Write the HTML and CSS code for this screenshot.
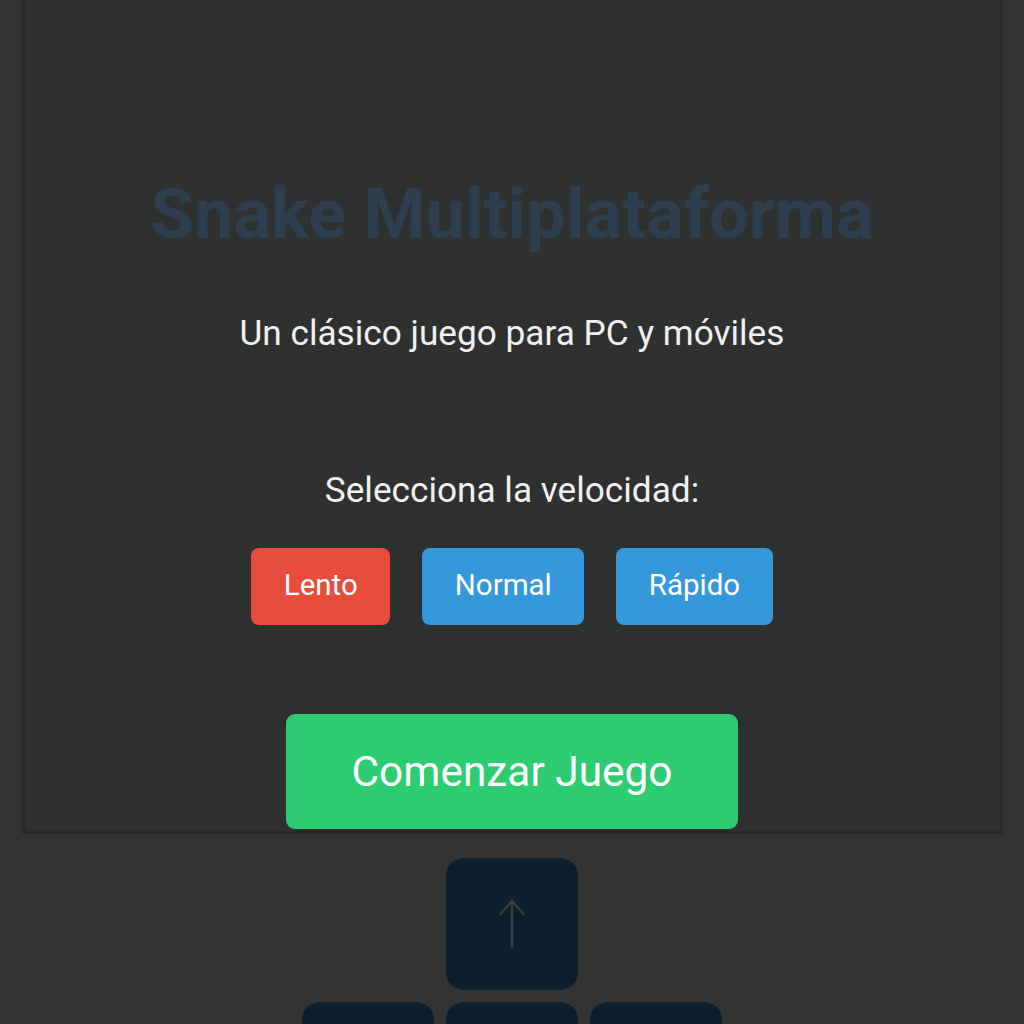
FILE: index.html
```html
<!DOCTYPE html>
<html lang="es">
<head>
<meta charset="utf-8">
<title>Snake Multiplataforma</title>
<link rel="stylesheet" href="styles.css">
</head>
<body>
<div class="game">
  <h1 class="title">Snake Multiplataforma</h1>
  <p class="subtitle">Un clásico juego para PC y móviles</p>
  <p class="speed-label">Selecciona la velocidad:</p>
  <div class="speeds">
    <button class="speed speed-active">Lento</button>
    <button class="speed">Normal</button>
    <button class="speed">Rápido</button>
  </div>
  <button class="start">Comenzar Juego</button>
</div>
<div class="controls">
  <div class="ctrl ctrl-up">
    <svg width="26" height="50" viewBox="0 0 26 50" fill="none" stroke="#3c3c3c" stroke-width="2.4" stroke-linecap="round" stroke-linejoin="round"><path d="M13 2V48M1.5 15L13 2L24.5 15"/></svg>
  </div>
  <div class="ctrl ctrl-low"></div>
  <div class="ctrl ctrl-low"></div>
  <div class="ctrl ctrl-low"></div>
</div>
</body>
</html>
```
FILE: styles.css
```css
html, body {
  margin: 0;
  padding: 0;
  background: #333333;
  font-family: Roboto, "Liberation Sans", sans-serif;
}
.game {
  box-sizing: border-box;
  width: 981px;
  height: 834px;
  margin: 0 auto;
  border: 3px solid #282929;
  border-top: 0;
  background: #2f3030;
  display: flex;
  flex-direction: column;
  align-items: center;
}
.title {
  margin: 178.6px 0 0;
  font-size: 70.5px;
  line-height: 70.5px;
  font-weight: 700;
  color: #2c3e50;
}
.subtitle {
  margin: 67.3px 0 0;
  font-size: 35.2px;
  line-height: 35.2px;
  color: #f0f0f0;
}
.speed-label {
  margin: 121.8px 0 0;
  font-size: 35.2px;
  line-height: 35.2px;
  color: #f0f0f0;
}
.speeds {
  margin-top: 39.4px;
  display: flex;
  gap: 32px;
}
.speed {
  height: 77px;
  padding: 0 32.5px 3px;
  border: 0;
  border-radius: 8px;
  background: #3498db;
  color: #ffffff;
  font-family: Roboto, "Liberation Sans", sans-serif;
  font-size: 29.5px;
}
.speed-active {
  background: #e74c3c;
}
.start {
  margin-top: 89px;
  width: 452px;
  height: 115px;
  border: 0;
  border-radius: 9px;
  background: #2ecc71;
  color: #ffffff;
  font-family: Roboto, "Liberation Sans", sans-serif;
  font-size: 42.4px;
}
.controls {
  margin: 24px auto 0;
  width: 420px;
  display: grid;
  grid-template-columns: repeat(3, 132px);
  gap: 12px;
}
.ctrl {
  height: 132px;
  border-radius: 18px;
  background: #0c1f2c;
  display: flex;
  align-items: center;
  justify-content: center;
}
.ctrl-up {
  grid-column: 2;
  grid-row: 1;
}
.ctrl-low {
  grid-row: 2;
}
```
